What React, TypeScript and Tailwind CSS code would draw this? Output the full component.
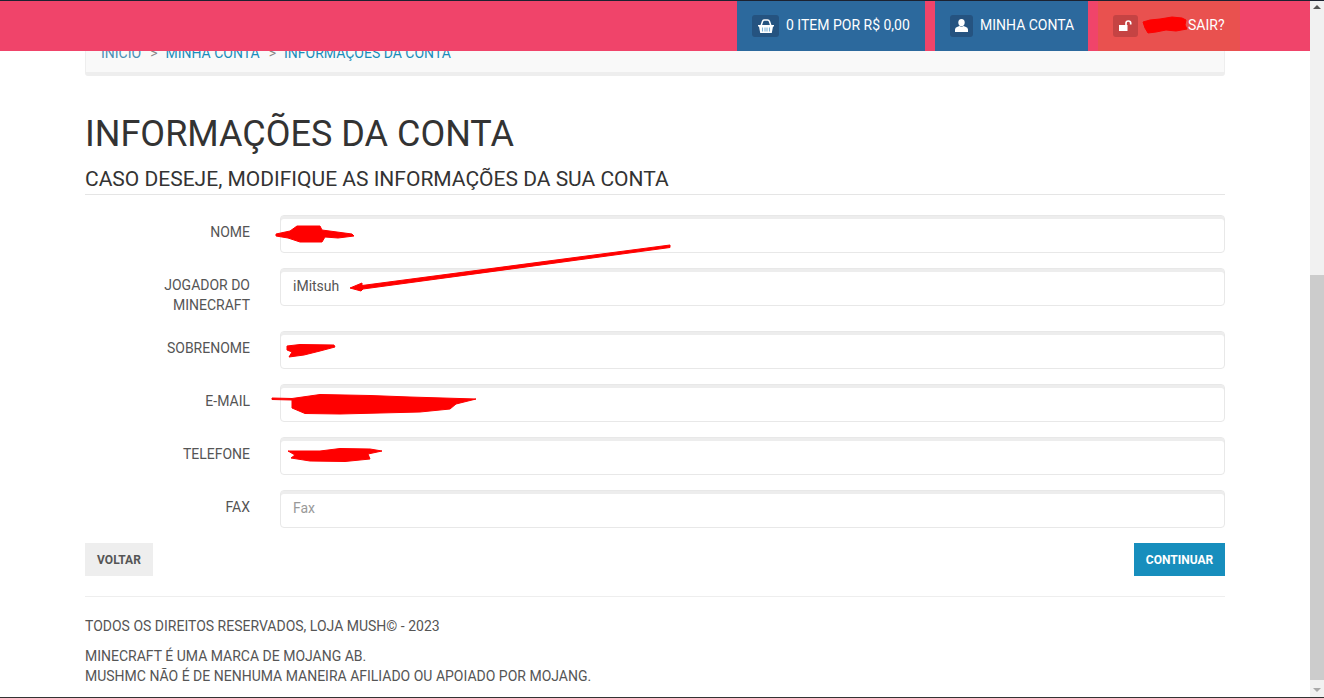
const fields = [
  { label: "NOME", value: "", placeholder: "" },
  { label: "JOGADOR DO MINECRAFT", value: "iMitsuh", placeholder: "" },
  { label: "SOBRENOME", value: "", placeholder: "" },
  { label: "E-MAIL", value: "", placeholder: "" },
  { label: "TELEFONE", value: "", placeholder: "" },
  { label: "FAX", value: "", placeholder: "Fax" },
];

const crumbs = ["MINHA CONTA", "INFORMAÇÕES DA CONTA"];

function BasketIcon() {
  return (
    <svg width="16" height="14" viewBox="0 0 16 14" fill="none">
      <path d="M3 7 L4.5 2.5 Q5 1 6.5 1 H9.5 Q11 1 11.5 2.5 L13 7" stroke="white" strokeWidth="1.5" />
      <path d="M0 6 H16 V7.5 H15 L13.8 14 H2.2 L1 7.5 H0 Z" fill="white" />
      <path d="M4.5 8.5 V12.5 M7 8.5 V12.5 M9 8.5 V12.5 M11.5 8.5 V12.5" stroke="#7fb2d6" strokeWidth="1.1" />
    </svg>
  );
}

function PersonIcon() {
  return (
    <svg width="13" height="13" viewBox="0 0 13 13" fill="white">
      <ellipse cx="6.5" cy="3.6" rx="3.2" ry="3.6" />
      <path d="M0 13 V10.5 Q0 8.4 2.6 7.8 L4.4 7 Q6.5 8.4 8.6 7 L10.4 7.8 Q13 8.4 13 10.5 V13 Z" />
    </svg>
  );
}

function UnlockIcon() {
  return (
    <svg width="13" height="11" viewBox="0 0 13 11" fill="none">
      <rect x="0" y="5" width="8.5" height="6" fill="white" />
      <path d="M7 5 V3.2 Q7 1 9.3 1 Q11.7 1 11.7 3.2 V4.4" stroke="white" strokeWidth="1.7" />
    </svg>
  );
}

function Scribbles() {
  return (
    <svg
      className="pointer-events-none absolute left-0 top-0 z-20"
      width="1324"
      height="698"
      fill="#ff0000"
      stroke="#ff0000"
      strokeWidth="1"
      strokeLinejoin="round"
    >
      <path d="M1143 22 L1150 20 L1160 19 L1172 17 L1182 18 L1186 20 L1185 25 L1187 29 L1176 31 L1166 30 L1156 32 L1148 33 L1145 28 Z" />
      <path d="M276 234 L290 231 L297 226 L320 226 L322 230 L352 234 L354 236 L338 238 L325 237 L322 242 L300 242 L288 238 L276 236 Z" />
      <path d="M670 245 L670 247.5 L363 289 L361 291 L350 288 L362 283 L362 285.5 Z" />
      <path d="M287 346 L300 344.5 L334 345 L335 347 L320 351 L304 355 L289 357 L292 352 L287 350 Z" />
      <path d="M272 398 L292 398.5 L320 394.5 L370 395.5 L410 397 L476 399 L456 404 L450 409 L420 412 L380 413 L340 414 L305 413.5 L292 408 L292 400 L272 399.5 Z" />
      <path d="M288 451 L320 451 L340 448.5 L370 449 L382 451 L368 454 L370 459 L345 461.5 L310 461 L291 458 L295 455 Z" />
    </svg>
  );
}

export default function App() {
  return (
    <div className="relative flex h-[698px] w-[1324px] overflow-hidden bg-white font-['Roboto',sans-serif] text-[#555]">
      <div className="flex w-[1310px] flex-col">
        <header className="relative z-10 flex h-[51px] shrink-0 justify-end gap-[10px] bg-[#f0446a] pr-[70px] text-sm text-white">
          <a className="flex w-[188px] items-center gap-[7px] bg-[#2c699d] pl-[15px]">
            <span className="flex h-[22px] w-[27px] items-center justify-center rounded-[3px] bg-[#255380]">
              <BasketIcon />
            </span>
            <span className="pb-[2px]">0 ITEM POR R$ 0,00</span>
          </a>
          <a className="flex w-[153px] items-center gap-[7px] bg-[#2c699d] pl-[15px]">
            <span className="flex h-[22px] w-[23px] items-center justify-center rounded-[3px] bg-[#255380]">
              <PersonIcon />
            </span>
            <span className="pb-[2px]">MINHA CONTA</span>
          </a>
          <a className="flex w-[142px] items-center gap-[50px] bg-[#e9514f] pl-[15px]">
            <span className="flex h-[22px] w-[25px] items-center justify-center rounded-[3px] bg-[#c54343]">
              <UnlockIcon />
            </span>
            <span className="pb-[2px]">SAIR?</span>
          </a>
        </header>

        <main className="mx-auto w-[1140px]">
          <nav className="-mt-[8px] flex h-[33px] items-start gap-[9px] rounded-b-[3px] border-x border-b-[4px] border-[#eee] bg-[#f9f9f9] pl-[15px] text-sm leading-[20px] text-[#1b8dbb]">
            <a className="text-[#4a8fb5]">INÍCIO</a>
            {crumbs.map((crumb) => (
              <span key={crumb} className="flex gap-[8px]">
                <span className="text-[#888]">&gt;</span>
                <a>{crumb}</a>
              </span>
            ))}
          </nav>

          <h1 className="mt-[35px] text-[36px] leading-[46px] text-[#333]">INFORMAÇÕES DA CONTA</h1>
          <h2 className="mt-[8px] border-b border-[#e5e5e5] pb-px text-[21px] leading-[28px] text-[#333]">
            CASO DESEJE, MODIFIQUE AS INFORMAÇÕES DA SUA CONTA
          </h2>

          <form className="mt-[20px] flex flex-col gap-[15px]">
            {fields.map((field) => (
              <div key={field.label} className="flex gap-[30px]">
                <label className="w-[165px] pb-px pt-[7px] text-right text-sm leading-[20px]">{field.label}</label>
                <input
                  readOnly
                  value={field.value}
                  placeholder={field.placeholder}
                  className="h-[38px] flex-1 rounded-[4px] border border-[#e8e8e8] px-[12px] pb-[2px] text-sm text-[#555] shadow-[inset_0_3px_0_#ededed] outline-none placeholder:text-[#999]"
                />
              </div>
            ))}
          </form>

          <div className="mt-[15px] flex justify-between">
            <button className="h-[33px] w-[68px] bg-[#eee] text-xs font-bold text-[#555]">VOLTAR</button>
            <button className="h-[33px] w-[91px] bg-[#178ebd] text-xs font-bold text-white">CONTINUAR</button>
          </div>

          <footer className="mt-[20px] border-t border-[#eee] pt-[19px] text-sm leading-[20px]">
            <p>TODOS OS DIREITOS RESERVADOS, LOJA MUSH© - 2023</p>
            <p className="mt-[10px]">MINECRAFT É UMA MARCA DE MOJANG AB.</p>
            <p>MUSHMC NÃO É DE NENHUMA MANEIRA AFILIADO OU APOIADO POR MOJANG.</p>
          </footer>
        </main>
      </div>

      <div className="relative w-[14px] bg-[#f1f1f1]">
        <div className="absolute left-0 right-0 top-[275px] h-[405px] bg-[#ccc]" />
        <span className="absolute left-[3px] top-[5px] h-0 w-0 border-x-[4px] border-b-[4px] border-x-transparent border-b-[#555]" />
        <span className="absolute bottom-[6px] left-[3px] h-0 w-0 border-x-[4px] border-t-[4px] border-x-transparent border-t-[#aaa]" />
      </div>

      {/* window edges from the capture */}
      <div className="absolute inset-x-0 top-0 z-30 h-px bg-[#1c2230]" />
      <div className="absolute inset-x-0 bottom-0 z-30 h-px bg-[#333]" />
      <Scribbles />
    </div>
  );
}
